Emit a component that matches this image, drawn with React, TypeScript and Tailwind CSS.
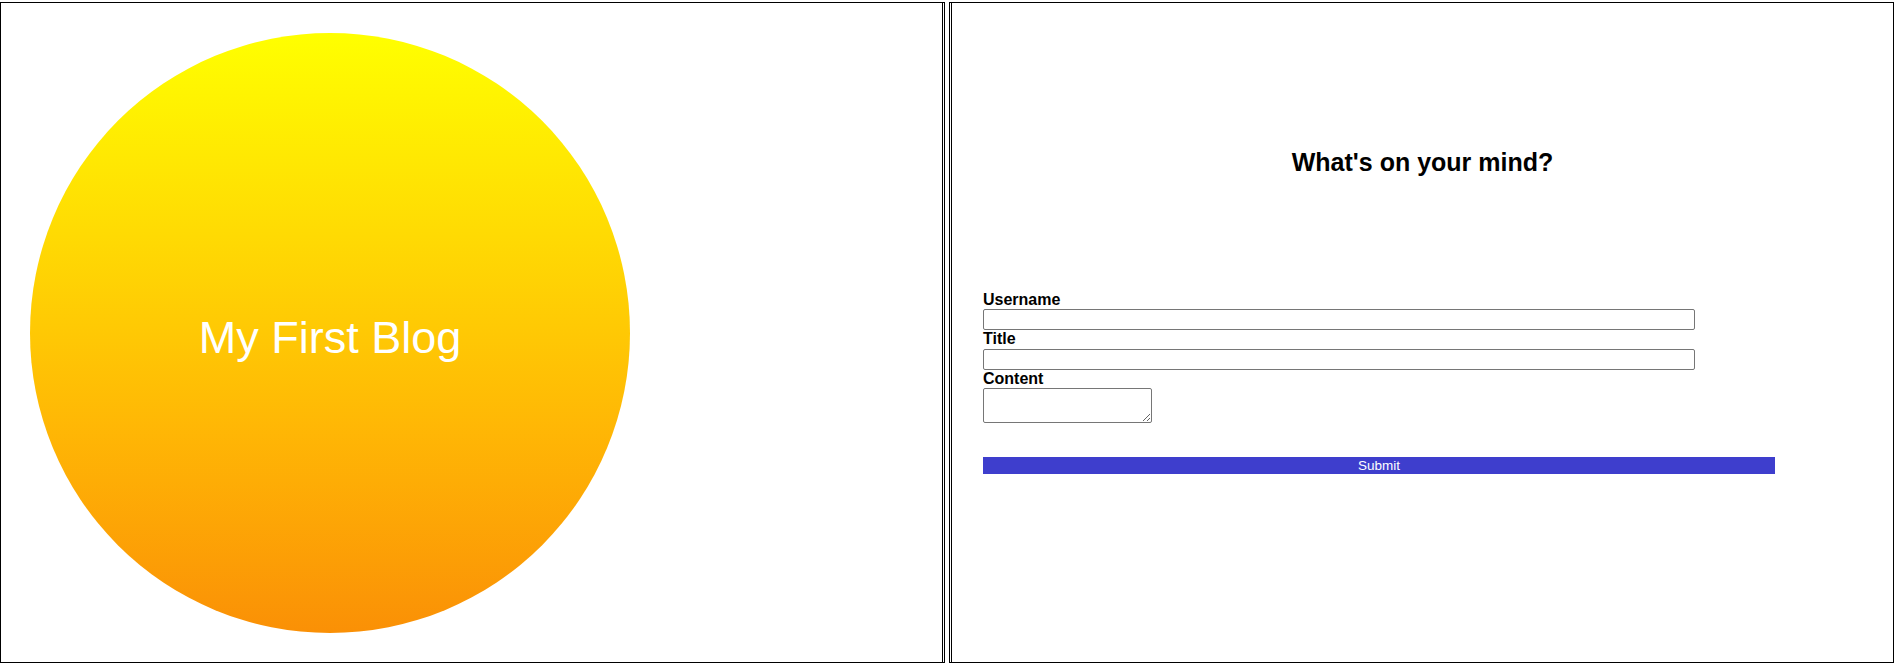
export default function App() {
  return (
    <div className="flex h-[664px] w-[1895px] bg-white font-['Liberation_Sans',Arial,sans-serif] text-black">
      <div className="mt-[2px] h-[661px] w-[945px] border border-r-[3px] border-double border-black">
        <div className="ml-[29px] mt-[30px] flex h-[600px] w-[600px] items-center justify-center rounded-full bg-gradient-to-b from-[#ffff00] to-[#fa9006]">
          <span className="pt-[10px] text-[45px] text-white">My First Blog</span>
        </div>
      </div>
      <div className="ml-[4px] mt-[2px] h-[661px] w-[945px] border border-l-[3px] border-double border-black">
        <h2 className="mt-[145px] text-center text-[25px] font-bold leading-[28px]">
          What's on your mind?
        </h2>
        <form className="mt-[115px] pl-[31px]" onSubmit={(e) => e.preventDefault()}>
          <label className="block text-[16px] font-bold leading-[18.4px]">Username</label>
          <input
            type="text"
            className="block h-[21px] w-[712px] rounded-[2px] border border-[#767676] px-[2px] text-[13px]"
          />
          <label className="block text-[16px] font-bold leading-[18.4px]">Title</label>
          <input
            type="text"
            className="block h-[21px] w-[712px] rounded-[2px] border border-[#767676] px-[2px] text-[13px]"
          />
          <label className="block text-[16px] font-bold leading-[18.4px]">Content</label>
          <textarea className="block h-[35px] w-[169px] rounded-[2px] border border-[#767676] p-[2px] text-[13px]" />
          <button
            type="submit"
            className="mt-[34px] block h-[17px] w-[792px] bg-[#3e3ecd] text-[13.5px] leading-[17px] text-white"
          >
            Submit
          </button>
        </form>
      </div>
    </div>
  );
}
